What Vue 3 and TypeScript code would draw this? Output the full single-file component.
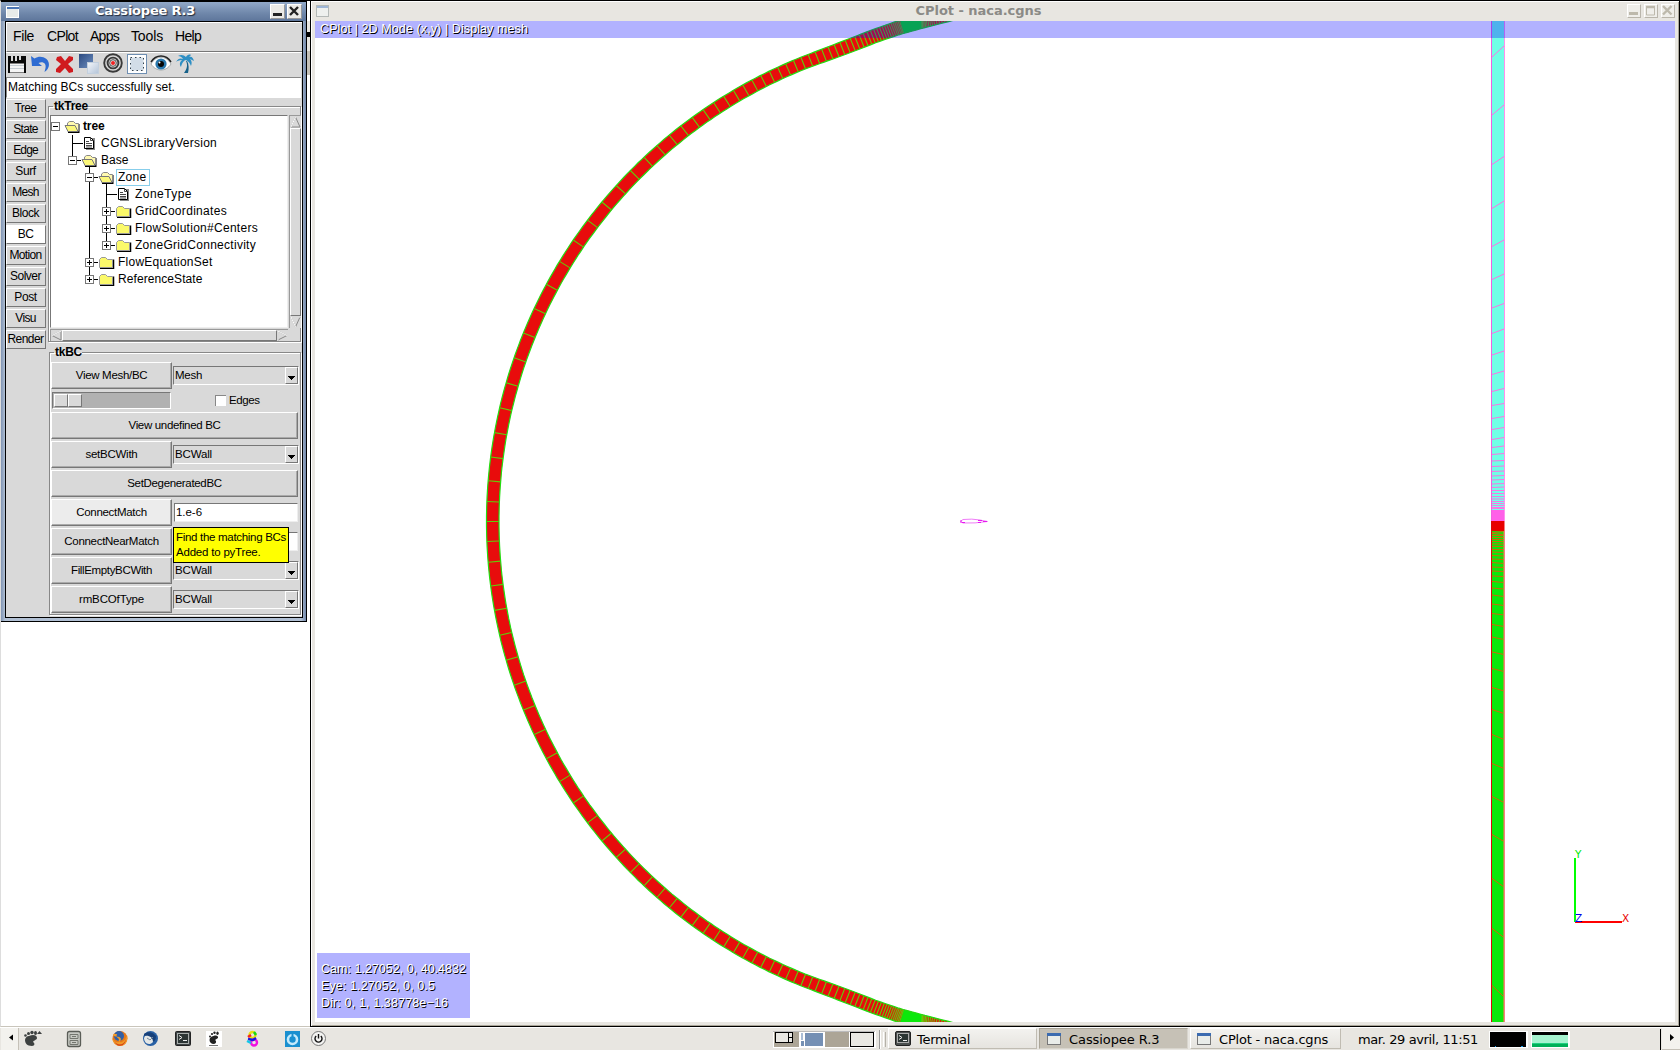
<script setup lang="ts">
type Pt = [number, number]

const ctx = document.createElement('canvas').getContext('2d')!

// Letter spacing that makes a label as wide as its bitmap-font original
function fit(text: string, width: number, font: string) {
  ctx.font = font
  const extra = (width + 1 - ctx.measureText(text).width) / text.length
  return { letterSpacing: extra.toFixed(3) + 'px' }
}
const SANS = '"Liberation Sans"'
const DEJA = '"DejaVu Sans"'

const menus = [
  { t: 'File', w: 20, x: 6 },
  { t: 'CPlot', w: 30, x: 40 },
  { t: 'Apps', w: 28, x: 83 },
  { t: 'Tools', w: 31, x: 124 },
  { t: 'Help', w: 25, x: 168 },
]

const tabs: [string, number][] = [
  ['Tree', 21], ['State', 23.5], ['Edge', 23.5], ['Surf', 19.5], ['Mesh', 25.5], ['Block', 26],
  ['BC', 14.7], ['Motion', 31], ['Solver', 30], ['Post', 21.5], ['Visu', 19.5], ['Render', 35],
]

interface Row { t: string; w: number; tx: number; box?: '-' | '+'; bx: number; kind: 'open' | 'shut' | 'file'; ix: number; v: [number, number, number][] }
const rows: Row[] = [
  { t: 'tree', w: 20.5, tx: 33, box: '-', bx: 5, kind: 'open', ix: 14, v: [] },
  { t: 'CGNSLibraryVersion', w: 115, tx: 51, bx: 22, kind: 'file', ix: 33, v: [[22, 0, 17]] },
  { t: 'Base', w: 26.5, tx: 51, box: '-', bx: 22, kind: 'open', ix: 31, v: [[22, 0, 8]] },
  { t: 'Zone', w: 27.5, tx: 68, box: '-', bx: 39, kind: 'open', ix: 48, v: [[39, 0, 17]] },
  { t: 'ZoneType', w: 56, tx: 85, bx: 56, kind: 'file', ix: 67, v: [[39, 0, 17], [56, 0, 17]] },
  { t: 'GridCoordinates', w: 91, tx: 85, box: '+', bx: 56, kind: 'shut', ix: 65, v: [[39, 0, 17], [56, 0, 17]] },
  { t: 'FlowSolution#Centers', w: 122, tx: 85, box: '+', bx: 56, kind: 'shut', ix: 65, v: [[39, 0, 17], [56, 0, 17]] },
  { t: 'ZoneGridConnectivity', w: 120, tx: 85, box: '+', bx: 56, kind: 'shut', ix: 65, v: [[39, 0, 17], [56, 0, 8]] },
  { t: 'FlowEquationSet', w: 93.5, tx: 68, box: '+', bx: 39, kind: 'shut', ix: 48, v: [[39, 0, 17]] },
  { t: 'ReferenceState', w: 83.5, tx: 68, box: '+', bx: 39, kind: 'shut', ix: 48, v: [[39, 0, 8]] },
]

interface BcRow { label: string; w: number; combo?: string; cw?: number; entry?: string; wide?: boolean; hot?: boolean }
const bcRows: BcRow[] = [
  { label: 'View undefined BC', w: 91, wide: true },
  { label: 'setBCWith', w: 51, combo: 'BCWall', cw: 36 },
  { label: 'SetDegeneratedBC', w: 93.5, wide: true },
  { label: 'ConnectMatch', w: 69.5, entry: '1.e-6', hot: true },
  { label: 'ConnectNearMatch', w: 93.5, entry: ' ' },
  { label: 'FillEmptyBCWith', w: 80, combo: 'BCWall', cw: 36 },
  { label: 'rmBCOfType', w: 64, combo: 'BCWall', cw: 36 },
]

// ---- C-mesh outer layer: lower half, mirrored about the symmetry line ----
const CY = 500.5
const CX = 671.5
const RO = 500
const RI = 487.5
const SWEEP = 68.5 * Math.PI / 180
const BEND = SWEEP * RO
// past the circular part: [outer arc length, outer x, outer y, inner x, inner y]
const tail = [
  [BEND, CX - RO * Math.cos(SWEEP), RO * Math.sin(SWEEP), CX - RI * Math.cos(SWEEP), RI * Math.sin(SWEEP)],
  [639, 527, 480, 532, 467.6],
  [673, 558.7, 492.3, 563.5, 479.8],
  [697, 581, 500, 585.8, 487.3],
  [722, 606, 507.5, 606.5, 493],
  [747, 630, 514, 635, 500.3],
  [783, 665, 522, 670, 509],
]
const END = 780
function arcPoint(s: number, isInner: boolean): Pt {
  if (s <= BEND) {
    const a = s / RO
    const r = isInner ? RI : RO
    return [CX - r * Math.cos(a), r * Math.sin(a)]
  }
  const i = tail.findIndex(p => s <= p[0])
  const p = tail[i - 1]
  const q = tail[i]
  const f = (s - p[0]) / (q[0] - p[0])
  const c = isInner ? 3 : 1
  return [p[c] + f * (q[c] - p[c]), p[c + 1] + f * (q[c + 1] - p[c + 1])]
}
function spacing(s: number) {
  const k: Pt[] = [[0, 20], [20, 20.7], [42, 24.2], [90, 25.3], [150, 26.5], [230, 27], [300, 24.5], [370, 20.5], [440, 15], [515, 11], [575, 8.6], [630, 6.2], [672, 3.3], [695, 1.8], [705, 1], [722, 1], [735, 2.2], [790, 4]]
  for (let i = 1; i < k.length; i++) {
    if (s <= k[i][0]) {
      const f = (s - k[i - 1][0]) / (k[i][0] - k[i - 1][0])
      return k[i - 1][1] + f * (k[i][1] - k[i - 1][1])
    }
  }
  return 4
}
const stations: number[] = []
for (let s = 0; s < END; s += spacing(s)) stations.push(s)
function edge(isInner: boolean, sign: number) {
  const p: string[] = []
  for (let s = 0; s <= END; s += 5) {
    const [x, y] = arcPoint(s, isInner)
    p.push(x.toFixed(1) + ',' + (CY + sign * y).toFixed(1))
  }
  return p
}
const outer = [...edge(false, -1).reverse(), ...edge(false, 1)]
const inner = [...edge(true, -1).reverse(), ...edge(true, 1)]
const band = [...outer, ...[...inner].reverse()].join(' ')
const ribs = stations.flatMap(s => [1, -1].map(g => {
  const a = arcPoint(s, false)
  const b = arcPoint(s, true)
  return `M${a[0].toFixed(1)} ${(CY + g * a[1]).toFixed(1)}L${b[0].toFixed(1)} ${(CY + g * b[1]).toFixed(1)}`
})).join('')
// the cells around the wake point are thinner than a pixel
const dense = [1, -1].map(g => [arcPoint(701, false), arcPoint(722, false), arcPoint(722, true), arcPoint(701, true)]
  .map(p => p[0].toFixed(1) + ',' + (CY + g * p[1]).toFixed(1)).join(' '))

// ---- outflow strip, (left y, right y) of each mesh line ----
const upper: Pt[] = [
  [57, 46], [115, 105], [164.5, 156.5], [208.5, 201], [246.5, 240], [279.5, 274], [308, 303.5], [333.5, 329], [355, 351], [374.5, 371],
  [391.5, 388.5], [405.5, 403.5], [418.5, 416.5], [429.5, 427.5], [439.5, 437.5], [447.5, 446], [454.5, 453.5], [461, 460.5], [466.5, 466],
  [471.5, 471], [476, 475.5], [480, 479.5], [484, 483.5], [487.5, 487], [490.5, 490.5], [493.5, 493.5], [496.5, 496.5], [499, 499], [501.5, 501.5], [503.5, 503.5], [505.5, 505.5], [507.5, 507.5], [508.5, 508.5],
]
const lower: Pt[] = [
  [532.5, 531.5], [533.5, 534.5], [535.5, 535.5], [537.5, 537.5], [539.5, 539.5], [541.5, 541.5], [544, 544], [546.5, 546.5], [549.5, 549.5], [552, 552.5], [555.5, 556], [559, 559.5], [562.5, 563.5], [567, 567.5], [571, 571.5], [576, 576.5],
  [581.5, 582.5], [588, 589], [595, 596.5], [604, 605.5], [613.5, 615], [624.5, 626.5], [637, 639.5], [652, 654.5], [668.5, 671.5],
  [687.5, 691], [709.5, 713.5], [734.5, 739.5], [763.5, 768.5], [796.5, 802.5], [834.5, 841.5], [878.5, 887], [928.5, 937.5], [985.5, 997],
]
const rungs = (list: Pt[]) => list.map(([l, r]) => `M1177 ${l - 21}L1189 ${r - 21}`).join('')
</script>

<template>
  <div class="desktop">
    <div class="work">
      <div class="leftcol">
        <section class="tk">
          <header class="tk-title">
            <svg width="14" height="12" viewBox="0 0 14 12"><rect x=".5" y=".5" width="12" height="11" fill="#e8ebe9" stroke="#fff" /><rect x="1" y="1" width="12" height="2" fill="#4c76b5" /></svg>
            <b :style="fit('Cassiopee R.3', 99, 'bold 13px ' + DEJA)">Cassiopee R.3</b>
            <i class="wb"><svg width="14" height="14"><path d="M3 10.5h9" stroke="#222" stroke-width="3" /></svg></i>
            <i class="wb"><svg width="14" height="14"><path d="M3 3l8 8M11 3l-8 8" stroke="#222" stroke-width="2.4" /></svg></i>
          </header>
          <div class="client">
            <nav class="menu">
              <span v-for="m in menus" :key="m.t" :style="{ ...fit(m.t, m.w, '14px ' + SANS), left: m.x + 'px' }">{{ m.t }}</span>
            </nav>
            <div class="tools">
              <svg width="196" height="25" viewBox="6 52 196 25">
                <defs>
                  <linearGradient id="gb" x1="0" y1="0" x2="1" y2="1"><stop offset="0" stop-color="#2c4a80" /><stop offset="1" stop-color="#6d8fc0" /></linearGradient>
                  <linearGradient id="gl" x1="0" y1="0" x2="1" y2="1"><stop offset="0" stop-color="#f3f6fa" /><stop offset="1" stop-color="#b4c4d8" /></linearGradient>
                </defs>
                <path d="M8 56h3v5h2v-5h2v5h2v-5h2v4h2v-4h5v17H8z" fill="#0a0a0a" /><path d="M10 63.500h14v9H10z" fill="#f4f4f4" /><path d="M10 65.500h14M10 68.500h14" stroke="#c4ccd2" />
                <path d="M31 56l1 10h10l-3.500-3c4-2 8 0 7 5l-1 4c5-3 6-9 2-13-4-3-8-3-12-0.500z" fill="#2f6cd2" />
                <path d="M57 57l4-1 4 5 4-5 4 1v3l-5 4 5 5v3l-4 1-4-5-5 5-4-1v-3l5-5-5-4z" fill="#d01b1f" />
                <rect x="79" y="54" width="14" height="14" fill="url(#gb)" /><rect x="87.500" y="62.500" width="11" height="11" fill="url(#gl)" stroke="#c3d0de" />
                <g fill="none" stroke="#3a3a3a" stroke-width="1.900"><circle cx="113" cy="63" r="8.800" /><circle cx="113" cy="63" r="5.400" /></g><circle cx="113" cy="63" r="3.300" fill="#e8e8e8" stroke="#555" /><circle cx="113" cy="63" r="2" fill="#ef2020" />
                <rect x="127.500" y="54.500" width="19" height="19" fill="#fff" stroke="#6f8fb2" /><rect x="130.500" y="57.500" width="13" height="13" fill="#d2dde8" stroke="#354450" stroke-dasharray="1.500 3" />
                <path d="M151 64c5-9 15-9 20 0-5 8-15 8-20 0z" fill="#fff" stroke="#8b9294" stroke-width=".7" /><path d="M151 62c5-8 15-8 20 0" fill="none" stroke="#222" stroke-width="1.500" /><circle cx="161" cy="64" r="5.600" fill="#2a78ad" /><circle cx="161" cy="64" r="3" fill="#050505" /><circle cx="159.500" cy="62.500" r="1" fill="#fff" />
                <path d="M186 61c2 4 1 8-2 12h4c1-4 1-9-1-12z" fill="#17628a" /><path d="M176 62c2-4 5-4 7-3-1-2-3-3-5-3 3-2 6-1 8 1 1-2 3-3 5-2l-2 2c3-1 4 1 5 4l-4-2c2 2 2 4 1 7-1-3-3-5-5-6-2 0-4 3-5 7-2-3-1-5 1-7-3 0-5 1-6 2z" fill="#2e8fc4" />
              </svg>
            </div>
            <div class="status"><span :style="fit('Matching BCs successfully set.', 166, '12px ' + SANS)">Matching BCs successfully set.</span></div>
            <div class="body">
              <div class="tabs">
                <button v-for="t in tabs" :key="t[0]" :class="{ on: t[0] === 'BC' }"><span :style="fit(t[0], t[1], '12px ' + SANS)">{{ t[0] }}</span></button>
              </div>
              <div class="panes">
                <fieldset class="frame tree">
                  <legend :style="fit('tkTree', 33, 'bold 12px ' + SANS)">tkTree</legend>
                  <div class="treegrid">
                    <div class="list">
                      <div v-for="(r, i) in rows" :key="r.t" class="trow">
                        <svg :width="r.tx - 1" height="17" shape-rendering="crispEdges">
                          <rect v-for="(l, k) in r.v" :key="k" :x="l[0]" :y="l[1]" width="1" :height="l[2]" />
                          <rect v-if="i > 0" :x="r.bx" y="8" :width="r.ix - r.bx" height="1" />
                          <rect v-if="r.box === '-' && i > 0 || i === 3" :x="r.bx + 17" y="14" width="1" height="3" />
                          <g v-if="r.box">
                            <rect :x="r.bx - 3.5" y="4.500" width="8" height="8" fill="#fff" stroke="#777" />
                            <rect :x="r.bx - 2" y="8" width="5" height="1" />
                            <rect v-if="r.box === '+'" :x="r.bx" y="6" width="1" height="5" />
                          </g>
                          <svg v-if="r.kind === 'file'" :x="r.ix" y="1" width="13" height="15" shape-rendering="auto">
                            <path d="M2 2h9v12H2z" fill="#888" transform="translate(1 0)" /><path d="M1.500 1.500h6l3 3v8h-9z" fill="#fff" stroke="#000" /><path d="M7.500 1.500v3h3M3 5.500h3M3 7.500h6M3 9.500h6M3 11h6" fill="none" stroke="#333" stroke-width=".9" />
                          </svg>
                          <svg v-else :x="r.ix" y="2" width="17" height="13" shape-rendering="auto">
                            <path v-if="r.kind === 'shut'" d="M2 12.500h13.500V3.500" fill="none" stroke="#000" stroke-width="1.500" />
                            <path v-if="r.kind === 'shut'" d="M1.500 11.500v-8l2-2h4l2 2h5v8z" fill="#fbf96a" stroke="#999" />
                            <g v-else><path d="M4 12h10.500V4" fill="none" stroke="#000" stroke-width="2" /><path d="M3.500 11V3l2-1.500h4l2 2h3V11z" fill="#fff9b0" stroke="#888" /><path d="M1 5.500h10l3 6H4z" fill="#fbf77a" stroke="#777" /></g>
                          </svg>
                        </svg>
                        <span :class="{ root: i === 0, sel: i === 3 }" :style="fit(r.t, r.w, (i === 0 ? 'bold ' : '') + '12px ' + SANS)">{{ r.t }}</span>
                      </div>
                    </div>
                    <div class="vbar">
                      <svg width="11" height="12"><path d="M5.500 1l4.500 10H1z" fill="#d9d9d9" stroke="#888" /><path d="M5.500 1L1 11" stroke="#fff" /></svg>
                      <i></i>
                      <svg width="11" height="12"><path d="M1 1h9L5.500 11z" fill="#d9d9d9" stroke="#888" /><path d="M10 1H1l4.500 10" fill="none" stroke="#fff" /></svg>
                    </div>
                    <div class="hbar">
                      <svg width="11" height="11"><path d="M1 5.500L10 1v9z" fill="#d9d9d9" stroke="#888" /><path d="M10 1L1 5.500" stroke="#fff" /></svg>
                      <i></i>
                      <svg width="11" height="11"><path d="M10 5.500L1 1v9z" fill="#d9d9d9" stroke="#888" /><path d="M10 5.500L1 1v9" fill="none" stroke="#fff" /></svg>
                    </div>
                  </div>
                </fieldset>
                <fieldset class="frame bc">
                  <legend :style="fit('tkBC', 26, 'bold 12px ' + SANS)">tkBC</legend>
                  <div class="brow">
                    <button class="b"><span :style="fit('View Mesh/BC', 70.5, '11.5px ' + SANS)">View Mesh/BC</span></button>
                    <div class="combo"><span :style="fit('Mesh', 26, '11.5px ' + SANS)">Mesh</span><i><svg width="11" height="14"><path d="M2 8h7v1H8v1H7v1H6v1H5v-1H4v-1H3v-1H2z" /></svg></i></div>
                  </div>
                  <div class="srow">
                    <div class="slider"><i></i><i></i></div>
                    <label><i></i><span :style="fit('Edges', 29.5, '11.5px ' + SANS)">Edges</span></label>
                  </div>
                  <div v-for="r in bcRows" :key="r.label" class="brow">
                    <button class="b" :class="{ wide: r.wide, hot: r.hot }"><span :style="fit(r.label, r.w, '11.5px ' + SANS)">{{ r.label }}</span></button>
                    <div v-if="r.combo" class="combo"><span :style="fit(r.combo, r.cw ?? 0, '11.5px ' + SANS)">{{ r.combo }}</span><i><svg width="11" height="14"><path d="M2 8h7v1H8v1H7v1H6v1H5v-1H4v-1H3v-1H2z" /></svg></i></div>
                    <div v-if="r.entry" class="entry"><span :style="fit('1.e-6', 25, '11.5px ' + SANS)">{{ r.entry }}</span></div>
                  </div>
                  <div class="tip">
                    <span :style="fit('Find the matching BCs', 109, '11.5px ' + SANS)">Find the matching BCs</span>
                    <span :style="fit('Added to pyTree.', 83.5, '11.5px ' + SANS)">Added to pyTree.</span>
                  </div>
                </fieldset>
              </div>
            </div>
          </div>
        </section>
        <div class="sliver"><i></i></div>
      </div>

      <section class="plot">
        <header class="p-title">
          <svg width="13" height="13"><rect x=".5" y=".5" width="12" height="11" fill="#eef0ee" stroke="#b4b9b7" /><rect x="1" y="1" width="11" height="2" fill="#9fb6d6" /></svg>
          <b :style="fit('CPlot - naca.cgns', 125, 'bold 13px ' + DEJA)">CPlot - naca.cgns</b>
          <i class="pb"><svg width="13" height="13"><path d="M2 9.500h9" stroke="#bdb9ac" stroke-width="3" /></svg></i>
          <i class="pb"><svg width="13" height="13"><path d="M2.500 3v8h8V3z" fill="none" stroke="#bdb9ac" /><path d="M2 3h9" stroke="#bdb9ac" stroke-width="2.500" /></svg></i>
          <i class="pb"><svg width="13" height="13"><path d="M2 2l8.500 8.500M10.500 2L2 10.500" stroke="#bdb9ac" stroke-width="2.400" /></svg></i>
        </header>
        <div class="view">
          <svg class="scene" width="1360" height="1001" viewBox="0 0 1360 1001">
            <polygon :points="band" fill="#e80c0c" />
            <path :d="ribs" stroke="#62cc0a" stroke-width="1.100" fill="none" />
            <polygon v-for="d in dense" :key="d" :points="d" fill="#0be80b" />
            <polyline :points="outer.join(' ')" fill="none" stroke="#22dd10" stroke-width="1.200" />
            <polyline :points="inner.join(' ')" fill="none" stroke="#22dd10" stroke-width="1.200" />
            <g shape-rendering="crispEdges">
              <rect x="1177" y="0" width="12" height="490" fill="#70ffe6" />
              <rect x="1177" y="500" width="12" height="501" fill="#0be80b" />
            </g>
            <path :d="rungs(upper)" stroke="#fb74e4" />
            <path :d="rungs(lower)" stroke="#cc6a08" />
            <g shape-rendering="crispEdges">
              <rect x="1176" y="0" width="1" height="500" fill="#f060e0" />
              <rect x="1189" y="0" width="1" height="500" fill="#ff90f0" />
              <rect x="1176" y="500" width="1" height="501" fill="#d80808" />
              <rect x="1189" y="500" width="1" height="501" fill="#f58080" />
              <rect x="1188" y="510" width="1" height="491" fill="#8fae30" />
              <rect x="1177" y="489" width="12" height="11" fill="#ff60e8" />
              <rect x="1177" y="500" width="12" height="10" fill="#e80000" />
            </g>
            <path d="M645.500 500.500L648 498.500Q657 497.500 665 499L672.500 500.500Q660 502.500 648 502z" fill="#fff" stroke="#f07cf8" />
            <path d="M646 499v3M647 501.500h3M663 499.500h4M663 501.500h3M668 500.500h4" stroke="#e818f0" />
            <g shape-rendering="crispEdges">
              <rect x="1260" y="900" width="47" height="2" fill="#f00" />
              <rect x="1259" y="837" width="2" height="64" fill="#0f0" />
            </g>
            <g class="axis">
              <text x="1260" y="837" fill="#00e800">Y</text>
              <text x="1260" y="901" fill="#0000e8">Z</text>
              <text x="1307" y="901" fill="#e80000">X</text>
            </g>
          </svg>
          <div class="banner"><span :style="fit('CPlot | 2D Mode (x,y) | Display mesh', 207, '12.5px ' + SANS)">CPlot | 2D Mode (x,y) | Display mesh</span></div>
          <div class="info">
            <span :style="fit('Cam: 1.27052, 0, 40.4832', 144, '12.5px ' + SANS)">Cam: 1.27052, 0, 40.4832</span>
            <span :style="fit('Eye: 1.27052, 0, 0.5', 113, '12.5px ' + SANS)">Eye: 1.27052, 0, 0.5</span>
            <span :style="fit('Dir: 0, 1, 1.38778e−16', 126, '12.5px ' + SANS)">Dir: 0, 1, 1.38778e−16</span>
          </div>
        </div>
      </section>
    </div>

    <footer class="bar">
      <svg class="launch" width="773" height="23" viewBox="0 1027 773 23">
        <rect x="1" y="1028" width="18" height="22" fill="#f3f2ee" /><path d="M18.500 1028v22" stroke="#c5c1b8" /><path d="M13 1034.500v6l-4-3z" />
        <g fill="#3d4140"><path id="foot" d="M29 1036c4-2 8-1 8 2 0 2-3 2-4 4 2 1 2 4-1 4-5 0-7-3-7-6 0-2 2-4 4-4z" /><circle cx="25.500" cy="1035.500" r="1.300" /><circle cx="28.500" cy="1033.500" r="1.500" /><circle cx="32" cy="1032.500" r="1.700" /><ellipse cx="35.500" cy="1033" rx="1.500" ry="2" /><path d="M37 1034l2.500-3 2.500 3z" /></g>
        <rect x="67.500" y="1031.500" width="13" height="15" rx="2" fill="#c8cac4" stroke="#5a5d57" stroke-width="1.300" /><path d="M70 1034.500h8v4h-8zM70 1040.500h8v4h-8zM72 1036.500h4M72 1042.500h4" fill="none" stroke="#73766f" />
        <circle cx="120" cy="1038.500" r="7.500" fill="#e5781a" /><circle cx="119" cy="1036" r="5" fill="#315fa5" /><path d="M113 1034c1 4 4 2 6 3 3 1 2 4 0 5-3 1-5-1-7-4 1 6 5 8 9 8 5-1 7-5 6-11-1 4-3 6-5 7-3 1-4-1-3-3-2-1-3-3-2-5z" fill="#f19a27" /><path d="M114 1041c3 5 10 5 12-2-1 8-9 9-12 2z" fill="#d2391b" />
        <circle cx="150.500" cy="1038.500" r="7.500" fill="#2860a4" /><path d="M145 1036c4-3 9-1 9 3 0 3-3 5-5 5-3 0-5-3-5-6z" fill="#e4e7e6" /><path d="M144 1034c4-3 9-2 12 2 0 3-1 5-3 6 0-5-4-7-9-6z" fill="#174079" /><path d="M147 1038l3 2 3-3" stroke="#789" fill="none" />
        <rect x="175.500" y="1031.500" width="15" height="14" rx="1" fill="#3c4243" stroke="#222" /><rect x="177.500" y="1033.500" width="11" height="10" fill="#2c3534" stroke="#a8adab" /><path d="M179 1035.500l3 2-3 2M183 1040.500h4" stroke="#eee" fill="none" />
        <rect x="206" y="1031" width="16" height="16" fill="#fff" />
        <g fill="#222"><path d="M213.500 1036c3-1 5 0 4.500 2l-3 2c2 1 1 4-1 4-3 0-4.500-2-4.500-4s1.500-3.500 4-4z" /><circle cx="210" cy="1036.500" r="1" /><circle cx="212" cy="1034" r="1.100" /><circle cx="214.500" cy="1032.800" r="1.200" /><ellipse cx="217.500" cy="1033.200" rx="1.200" ry="1.700" /></g><path d="M209 1045.500h9" stroke="#777" />
        <g fill="none" stroke-width="2.400"><circle cx="252.500" cy="1035" r="3" stroke="#e8e010" /><path d="M248 1037l3-2" stroke="#f82020" /><path d="M254 1032l2 3" stroke="#18d818" /><circle cx="254" cy="1042.500" r="3" stroke="#f010e0" /><path d="M248 1039l5 1 3-2" stroke="#1818e0" /><path d="M247 1041l4 2" stroke="#10c8e8" /></g>
        <rect x="285" y="1031" width="15" height="16" fill="#1a90d0" /><circle cx="292.500" cy="1039.500" r="4.500" fill="none" stroke="#c4eafc" stroke-width="2.600" /><path d="M292.500 1033v6" stroke="#1a90d0" stroke-width="2" />
        <circle cx="318.500" cy="1038.500" r="7" fill="#f4f4f2" stroke="#777" /><path d="M316.200 1036a3.500 3.500 0 1 0 4.600 0M318.500 1034v4.500" fill="none" stroke="#111" stroke-width="1.400" />
      </svg>
      <svg class="pager" width="115" height="23" viewBox="773 1027 115 23" shape-rendering="crispEdges">
        <path d="M773 1031h103v17H773z" fill="#fff" /><path d="M773 1031h102v1H773z" fill="#bbb" /><rect x="774" y="1032" width="25" height="15" fill="#aca596" /><rect x="775.500" y="1032.500" width="17" height="10" fill="#e9e8e3" stroke="#000" /><rect x="788.500" y="1032.500" width="4" height="10" fill="#e9e8e3" stroke="#000" /><path d="M788 1037.500h5" stroke="#000" />
        <rect x="801" y="1033" width="2" height="7" fill="#a9bdd6" /><rect x="801" y="1041" width="3" height="5" fill="#7590b4" /><rect x="805" y="1033" width="18" height="13" fill="#7590b4" />
        <rect x="825" y="1032" width="24" height="15" fill="#aca596" /><rect x="850.500" y="1032.500" width="23" height="14" fill="#e9e8e3" stroke="#000" stroke-width="1" />
        <path d="M879.500 1030v19" stroke="#999" /><path d="M880.500 1030v19M883.500 1032v15" stroke="#fff" /><path d="M885.500 1032v15" stroke="#b5b1a8" />
      </svg>
      <div class="task term"><svg width="16" height="15"><rect x=".5" y=".5" width="15" height="14" rx="1.500" fill="#4a4f4e" stroke="#222" /><rect x="2.500" y="2.500" width="11" height="9" fill="#2b3533" stroke="#aaa" /><path d="M4 4.500l3 2-3 2M8 9.500h4" stroke="#eee" fill="none" /></svg><span :style="fit('Terminal', 52, '13px ' + DEJA)">Terminal</span></div>
      <div class="task on"><svg width="14" height="12"><rect x=".5" y=".5" width="13" height="11" fill="#e9ece9" stroke="#777" /><rect width="14" height="3" fill="#3b6bb0" /></svg><span :style="fit('Cassiopee R.3', 89.5, '13px ' + DEJA)">Cassiopee R.3</span></div>
      <div class="task last"><svg width="14" height="12"><rect x=".5" y=".5" width="13" height="11" fill="#e9ece9" stroke="#777" /><rect width="14" height="3" fill="#3b6bb0" /></svg><span :style="fit('CPlot - naca.cgns', 108, '13px ' + DEJA)">CPlot - naca.cgns</span></div>
      <span class="clock" :style="fit('mar. 29 avril, 11:51', 119, '13px ' + DEJA)">mar. 29 avril, 11:51</span>
      <svg width="193" height="23" viewBox="1487 1027 193 23" shape-rendering="crispEdges">
        <rect x="1488" y="1031" width="39" height="17" fill="#fff" /><rect x="1489" y="1032" width="36" height="15" fill="#000" /><rect x="1494" y="1046" width="1" height="1" fill="#18a0f0" /><rect x="1520" y="1046" width="2" height="1" fill="#18a0f0" />
        <rect x="1530" y="1031" width="39" height="17" fill="#fff" /><rect x="1531" y="1032" width="36" height="3" fill="#000" /><rect x="1531" y="1035" width="36" height="8" fill="#a6f3cf" /><rect x="1531" y="1043" width="36" height="4" fill="#00b058" /><rect x="1531" y="1043" width="36" height="1" fill="#20d080" />
        <rect x="1659" y="1029" width="1" height="21" fill="#000" /><rect x="1661" y="1028" width="18" height="22" fill="#f3f2ee" /><path d="M1661 1049h18v-21" fill="none" stroke="#c5c1b8" /><path d="M1669 1034v7l4-3.500z" fill="#000" shape-rendering="auto" />
      </svg>
    </footer>
  </div>
</template>

<style>
html, body { margin: 0; overflow: hidden; background: #fff; }
</style>

<style scoped>
.desktop { width: 1680px; height: 1050px; display: flex; flex-direction: column; background: #fff; font: 12px "Liberation Sans", sans-serif; color: #000; overflow: hidden; }
.desktop * { box-sizing: border-box; }
span, b, legend { white-space: pre; }
i { display: block; font-style: normal; }
svg { display: block; flex: none; }
button { font: inherit; color: inherit; padding: 0; margin: 0; border-radius: 0; display: flex; align-items: center; justify-content: center; }
.work { display: flex; height: 1027px; }
.leftcol { width: 310px; display: flex; align-items: flex-start; border-top: 1px solid #000; border-bottom: 1px solid #c9c5bb; border-left: 1px solid #ddd; flex: none; }
.tk { width: 306px; height: 621px; border: 1px solid #000; border-left: 0; background: linear-gradient(90deg, #7f93b2, #b1c0d4 4px, #b1c0d4 300px, #7288aa); padding: 0 3px 3px 4px; }
.tk-title { margin: 0 -3px 0 -4px; padding: 0 4px 0 5px; height: 19px; display: flex; align-items: center; background: linear-gradient(#92a9c8, #6f87aa 60%, #5e769b); }
.tk-title b { flex: 1; padding: 0 0 2px 2px; text-align: center; color: #fff; font: bold 13px "DejaVu Sans", sans-serif; text-shadow: 1px 1px 1px #222b3c; }
.wb { width: 15px; height: 15px; margin-left: 2px; background: #ebeae6; border: 1px solid #fff; border-right-color: #999; border-bottom-color: #999; }
.wb svg { margin: -1px; }
.client { height: 597px; border: 1px solid #000; border-left-width: 1px; background: #d9d9d9; display: flex; flex-direction: column; }
.menu { position: relative; height: 30px; border-top: 1px solid #fff; border-left: 1px solid #fff; border-bottom: 1px solid #777; flex: none; font-size: 14px; line-height: 27px; }
.menu span { position: absolute; top: 0; }
.tools { height: 25px; border-top: 1px solid #fff; flex: none; }
.tools svg { margin-top: -1px; }
.status { margin: 0 1px 0 0; height: 21px; background: #fff; border-top: 1px solid #888; border-left: 1px solid #888; border-bottom: 1px solid #fff; padding-left: 1px; line-height: 19px; flex: none; }
.body { display: flex; flex: 1; min-height: 0; }
.tabs { width: 42px; padding-top: 1px; display: flex; flex-direction: column; gap: 2px; flex: none; }
.tabs button { height: 19px; width: 40px; padding: 0 1px 1px 0; background: #d9d9d9; border: 1px solid #fff; border-right-color: #777; border-bottom-color: #777; }
.tabs .on { background: #fff; }
.panes { width: 254px; display: flex; flex-direction: column; }
.frame { position: relative; margin: 0; min-width: 0; padding: 0; border: 1px solid #888; box-shadow: inset 1px 1px #fff, 1px 1px #fff; flex: none; }
.frame legend { font-weight: bold; font-size: 12px; line-height: 15px; height: 15px; padding: 0 0 0 1px; margin-left: 4px; }
.tree { height: 243px; width: 253px; margin-top: 1px; }
.treegrid { display: grid; grid-template: 213px 12px / 238px 12px; gap: 1px; margin: 1px 0 0 1px; }
.list { background: #fff; border: 1px solid #777; border-right-color: #eee; border-bottom-color: #eee; padding-top: 2px; overflow: hidden; }
.trow { display: flex; height: 17px; align-items: center; margin-left: -1px; }
.trow span { line-height: 15px; padding: 0 1px; border: 1px solid transparent; margin-left: -1px; height: 17px; }
.trow .root { font-weight: bold; }
.trow .sel { border-color: #87ceeb; padding-right: 2px; }
.vbar, .hbar { display: flex; background: #d9d9d9; border: 1px solid #999; border-width: 1px 0 0 1px; }
.vbar { flex-direction: column; width: 12px; }
.vbar i, .hbar i { flex: 1; border: 1px solid #fff; border-right-color: #777; border-bottom-color: #777; }
.bc { width: 252px; height: 270px; margin: 3px 0 0 1px; padding-top: 2px; }
.bc legend { margin-left: 4px; }
.brow { height: 29px; display: flex; align-items: flex-start; padding-left: 1px; font-size: 11.5px; }
.b { width: 121px; height: 27px; padding-bottom: 2px; background: #d9d9d9; border: 1px solid #fff; border-right-color: #777; border-bottom-color: #777; box-shadow: inset -1px -1px #aaa; flex: none; }
.b.wide { width: 247px; }
.b.hot { background: #ececec; }
.combo { margin: 4px 0 0 1px; width: 126px; height: 19px; border: 1px solid #777; border-right-color: #fff; border-bottom-color: #fff; display: flex; justify-content: space-between; line-height: 16px; padding-left: 1px; }
.combo i { width: 13px; height: 17px; border: 1px solid #fff; border-right-color: #777; border-bottom-color: #777; }
.entry { margin: 4px 0 0 2px; width: 124px; height: 19px; background: #fff; border: 1px solid #777; border-right-color: #eee; border-bottom-color: #eee; line-height: 16px; padding-left: 1px; }
.srow { height: 21px; display: flex; font-size: 11.5px; padding-left: 2px; }
.slider { width: 119px; height: 17px; margin-top: 1px; background: #b1b1b1; border: 1px solid #777; border-right-color: #fff; border-bottom-color: #fff; padding: 1px; display: flex; }
.slider i { width: 14px; background: #d9d9d9; border: 1px solid #fff; border-right-color: #777; border-bottom-color: #777; }
.srow label { margin-left: 44px; display: flex; align-items: center; height: 18px; gap: 3px; }
.srow label i { width: 11px; height: 11px; background: #fff; border-top: 1px solid #888; border-left: 1px solid #888; }
.tip { position: absolute; left: 123px; top: 167px; width: 116px; height: 36px; background: #ff0; border: 1px solid #000; padding: 2px 2px; display: flex; flex-direction: column; font-size: 11.5px; line-height: 15px; z-index: 2; }
.sliver { width: 3px; height: 75px; padding-top: 20px; }
.sliver i { height: 54px; background: linear-gradient(#e8e6e1 11px, #000 11px 16px, #e8e6e1 16px 30px, #c5c1b8 30px); }
.plot { flex: 1; border: 1px solid #000; background: #e8e6e1; display: flex; flex-direction: column; box-shadow: inset 0 1px #fff, inset 1px 0 #fff, inset -1px -1px #a9a598; padding: 0 3px 0 4px; }
.p-title { height: 20px; display: flex; align-items: center; padding: 0 1px 0 1px; flex: none; }
.p-title b { flex: 1; text-align: center; font: bold 13px "DejaVu Sans", sans-serif; color: #8b8a86; padding: 0 0 2px 4px; }
.pb { width: 14px; height: 14px; margin-left: 3px; background: #efeeea; border: 1px solid #fff; border-right-color: #b9b5ab; border-bottom-color: #b9b5ab; }
.pb svg { margin: -1px; }
.view { position: relative; width: 1360px; height: 1001px; background: #fff; overflow: hidden; flex: none; }
.axis { font: 10.500px "DejaVu Sans", sans-serif; }
.banner, .info { position: absolute; background: rgba(0, 0, 255, .3); color: #fff; font-size: 12.5px; text-shadow: 1px 1px #000; }
.banner { left: 0; top: 0; width: 1360px; height: 17px; line-height: 17px; padding-left: 5px; }
.info { left: 2px; top: 932px; width: 153px; height: 65px; padding: 8px 0 0 4px; display: flex; flex-direction: column; line-height: 17px; }
.bar { height: 23px; background: #e8e6e1; display: flex; border-top: 1px solid #fff; font: 13px "DejaVu Sans", sans-serif; }
.bar > svg { margin-top: -1px; }
.task { width: 149px; height: 21px; margin-right: 2px; display: flex; align-items: center; border: 1px solid #fff; border-right-color: #c0bcb2; border-bottom-color: #c0bcb2; background: linear-gradient(#f3f2ef, #e6e4df); padding-left: 6px; gap: 8px; flex: none; }
.task.term { gap: 6px; }
.task.last { width: 151px; }
.task.on { background: #c6c1b6; border-color: #aaa598 #d8d5cd #d8d5cd #aaa598; padding-left: 7px; }
.task span { line-height: 18px; padding-top: 2px; }
.clock { width: 145px; padding-left: 15px; flex: none; line-height: 23px; }
</style>
